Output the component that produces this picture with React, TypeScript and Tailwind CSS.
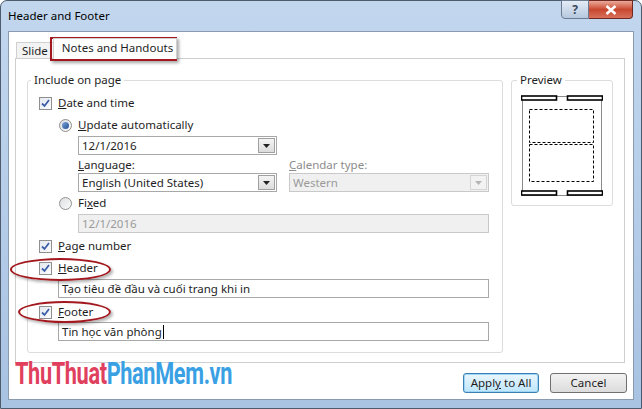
import React from "react";

const font = { fontFamily: '"Noto Sans", "Open Sans", sans-serif' };

function Check({ u, rest }: { u: string; rest: string }) {
  return (
    <div className="flex items-center h-[18px] gap-[6px]">
      <div className="w-[13px] h-[13px] border border-[#8f8f8f] bg-gradient-to-br from-[#e4e9f0] to-[#fbfcfd] flex items-center justify-center">
        <svg width="9" height="9" viewBox="0 0 9 9">
          <path d="M1 4.5 L3.5 7 L8 1" fill="none" stroke="#3d5fa8" strokeWidth="1.8" />
        </svg>
      </div>
      <span className="text-[11.5px] text-[#1e1e1e]">
        <span className="underline">{u}</span>
        {rest}
      </span>
    </div>
  );
}

function Radio({ on, children }: { on?: boolean; children: React.ReactNode }) {
  return (
    <div className="flex items-center h-[18px] gap-[6px]">
      <div className="w-[13px] h-[13px] rounded-full border border-[#8f8f8f] bg-gradient-to-br from-[#dcdfe3] to-[#fafafa] flex items-center justify-center">
        {on && <div className="w-[7px] h-[7px] rounded-full bg-gradient-to-br from-[#7ea6d8] to-[#1f4f95]" />}
      </div>
      <span className="text-[11.5px] text-[#1e1e1e]">{children}</span>
    </div>
  );
}

function Select({ value, w, disabled }: { value: string; w: string; disabled?: boolean }) {
  return (
    <div
      className={`flex items-center h-[19px] border ${w} ${
        disabled ? "border-[#c9c9c9] bg-[#f0f0f0] text-[#9a9a9a]" : "border-[#a8a8a8] bg-white text-[#1e1e1e]"
      }`}
    >
      <span className="flex-1 pl-[3px] text-[11.5px] leading-none">{value}</span>
      <div
        className={`w-[17px] h-[15px] mr-[1px] border flex items-center justify-center ${
          disabled ? "border-[#d5d5d5] bg-[#f2f2f2]" : "border-[#a0a0a0] bg-gradient-to-b from-[#f4f4f4] to-[#dcdcdc]"
        }`}
      >
        <svg width="7" height="4" viewBox="0 0 7 4">
          <path d="M0 0 L7 0 L3.5 4 Z" fill={disabled ? "#b5b5b5" : "#222"} />
        </svg>
      </div>
    </div>
  );
}

function TextBox({ value, w, disabled, caret }: { value: string; w: string; disabled?: boolean; caret?: boolean }) {
  return (
    <div
      className={`flex items-center h-[19px] ${w} border pl-[3px] text-[11.5px] ${
        disabled ? "border-[#c9c9c9] bg-[#f0f0f0] text-[#9a9a9a]" : "border-[#a8a8a8] bg-white text-[#1e1e1e]"
      }`}
    >
      {value}
      {caret && <span className="inline-block w-[1px] h-[14px] bg-black ml-[1px]" />}
    </div>
  );
}

function Preview() {
  return (
    <svg width="82" height="102" viewBox="0 0 82 102">
      <rect x="1.5" y="1.5" width="79" height="99" fill="white" stroke="#8a8a8a" strokeWidth="1" />
      {[1, 96].map((y) => (
        <g key={y}>
          <rect x="0.5" y={y} width="35" height="4" fill="white" stroke="black" strokeWidth="1.6" />
          <rect x="46.5" y={y} width="35" height="4" fill="white" stroke="black" strokeWidth="1.6" />
        </g>
      ))}
      <rect x="8.5" y="14.5" width="64" height="33" fill="none" stroke="black" strokeDasharray="3 2" />
      <rect x="8.5" y="49.5" width="64" height="37" fill="none" stroke="black" strokeDasharray="3 2" />
    </svg>
  );
}

export default function App() {
  return (
    <div className="w-[642px] h-[409px] relative overflow-hidden" style={font}>
      <div className="w-full h-full flex flex-col rounded-t-[7px] border border-[#4d5b6d] bg-gradient-to-b from-[#c2d7ee] via-[#b5cde9] to-[#a8c2e2] px-[7px] pb-[8px]">
        {/* title bar */}
        <div className="h-[30px] flex items-start">
          <span className="mt-[6px] text-[11.5px] text-black">Header and Footer</span>
          <div className="ml-auto flex mr-[1px] -mt-[1px]">
            <div className="w-[28px] h-[19px] rounded-bl-[4px] border border-[#6b7c91] bg-gradient-to-b from-[#e4ecf6] to-[#b6c8de] flex items-center justify-center text-[12px] font-bold text-[#3a4a5e]">
              ?
            </div>
            <div className="w-[44px] h-[19px] rounded-br-[4px] border border-l-0 border-[#6e2a22] bg-gradient-to-b from-[#e9a99a] via-[#c9462f] to-[#d7705a] flex items-center justify-center">
              <svg width="12" height="10" viewBox="0 0 12 10">
                <path d="M1.5 1 L10.5 9 M10.5 1 L1.5 9" stroke="white" strokeWidth="2.6" />
              </svg>
            </div>
          </div>
        </div>

        {/* client area */}
        <div className="flex-1 bg-white border border-[#8a9bb0] flex flex-col">
          {/* tabs */}
          <div className="flex items-end h-[26px] ml-[7px]">
            <div className="h-[16px] px-[5px] border border-b-0 border-[#d0d0d0] bg-[#f3f3f3] text-[11.5px] leading-[15px] text-[#1e1e1e] whitespace-nowrap">
              Slide
            </div>
            <div className="h-[21px] w-[124px] -ml-[1px] border border-b-0 border-[#d0d0d0] bg-white text-[11.5px] leading-[18px] text-[#1e1e1e] pl-[8px] relative z-10 -mb-[1px] whitespace-nowrap">
              Notes and Handouts
            </div>
          </div>

          {/* tab panel */}
          <div className="h-[305px] ml-[6px] mr-[8px] border border-[#cfcfcf] flex gap-[8px] pl-[11px] pt-[13px]">
            <fieldset className="w-[476px] min-w-0 h-[281px] border border-[#dcdcdc] rounded-[3px] pl-[11px] pr-0 pb-0 pt-0 m-0 flex-none">
              <legend className="px-[3px] -ml-[8px] text-[11.5px] leading-[16px] text-[#1e1e1e]">Include on page</legend>
              <div className="mt-[6px]">
                <Check u="D" rest="ate and time" />
              </div>
              <div className="ml-[20px] mt-[4px] flex flex-col">
                <Radio on>
                  <span className="underline">U</span>pdate automatically
                </Radio>
                <div className="ml-[19px] mt-[2px]">
                  <Select value="12/1/2016" w="w-[199px]" />
                </div>
                <div className="ml-[19px] flex gap-[12px] mt-[1px]">
                  <div className="flex flex-col">
                    <span className="h-[17px] text-[11.5px] leading-[17px] text-[#1e1e1e]">
                      <span className="underline">L</span>anguage:
                    </span>
                    <Select value="English (United States)" w="w-[199px]" />
                  </div>
                  <div className="flex flex-col">
                    <span className="h-[17px] text-[11.5px] leading-[17px] text-[#8c8c8c]">
                      <span className="underline">C</span>alendar type:
                    </span>
                    <Select value="Western" w="w-[200px]" disabled />
                  </div>
                </div>
                <div className="mt-[2px]">
                  <Radio>
                    Fi<span className="underline">x</span>ed
                  </Radio>
                </div>
                <div className="ml-[19px] mt-[2px]">
                  <TextBox value="12/1/2016" w="w-[411px]" disabled />
                </div>
              </div>
              <div className="mt-[4px]">
                <Check u="P" rest="age number" />
              </div>
              <div className="mt-[4px]">
                <Check u="H" rest="eader" />
              </div>
              <div className="ml-[19px] mt-[2px]">
                <TextBox value="Tạo tiêu đề đầu và cuối trang khi in" w="w-[431px]" />
              </div>
              <div className="mt-[5px]">
                <Check u="F" rest="ooter" />
              </div>
              <div className="ml-[19px] mt-[1px]">
                <TextBox value="Tin học văn phòng" w="w-[431px]" caret />
              </div>
            </fieldset>

            <fieldset className="w-[102px] min-w-0 h-[134px] border border-[#dcdcdc] rounded-[3px] p-0 m-0 flex-none flex flex-col items-center">
              <legend className="px-[3px] ml-[5px] text-[11.5px] leading-[16px] text-[#1e1e1e]">Preview</legend>
              <div className="mt-[7px] flex justify-center">
                <Preview />
              </div>
            </fieldset>
          </div>

          {/* buttons */}
          <div className="flex justify-end gap-[11px] mt-[10px] pr-[6px]">
            <div className="w-[76px] h-[20px] rounded-[3px] border border-[#3c7fb1] bg-gradient-to-b from-[#eaf6fd] to-[#bee6fd] shadow-[inset_0_0_0_1px_#9ed5f7] flex items-center justify-center text-[11.5px] text-[#1e1e1e]">
              Appl<span className="underline">y</span>&nbsp;to All
            </div>
            <div className="w-[77px] h-[20px] rounded-[3px] border border-[#707070] bg-gradient-to-b from-[#f2f2f2] to-[#dcdcdc] flex items-center justify-center text-[11.5px] text-[#1e1e1e]">
              Cancel
            </div>
          </div>
        </div>
      </div>

      {/* annotation overlays */}
      <div className="absolute left-[50px] top-[37px] w-[127px] h-[24px] border-2 border-[#a3181f] shadow-[2px_2px_3px_rgba(0,0,0,0.35)]" />
      <div className="absolute left-[10px] top-[258px] w-[101px] h-[23px] rounded-[50%] border-2 border-[#a3181f] shadow-[2px_2px_3px_rgba(0,0,0,0.3)]" />
      <div className="absolute left-[18px] top-[301px] w-[93px] h-[22px] rounded-[50%] border-2 border-[#a3181f] shadow-[2px_2px_3px_rgba(0,0,0,0.3)]" />

      {/* watermark */}
      <div
        className="absolute left-[15px] top-[358px] text-[31px] font-bold leading-none tracking-[-0.5px] origin-left scale-x-[0.7]"
        style={{ fontFamily: '"Roboto", "Liberation Sans", sans-serif' }}
      >
        <span className="text-[#e0405d]">ThuThuat</span>
        <span className="text-[#3aa0e4]">PhanMem.vn</span>
      </div>
    </div>
  );
}
